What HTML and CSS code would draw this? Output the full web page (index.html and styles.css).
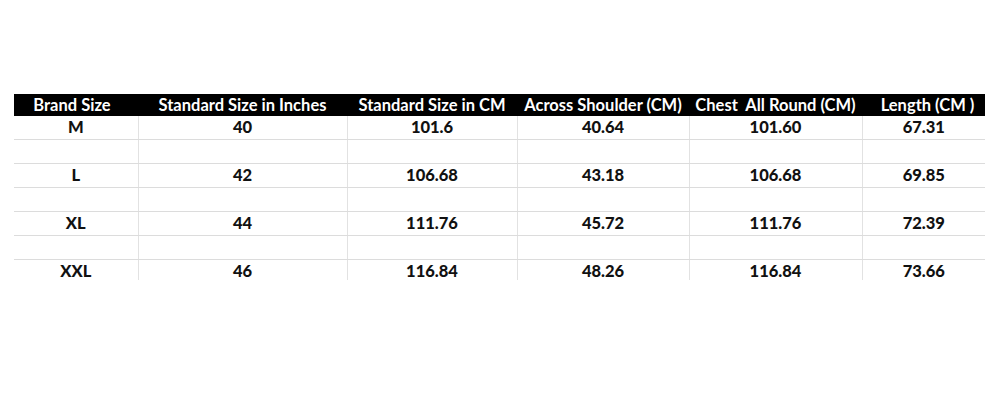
FILE: index.html
```html
<!DOCTYPE html>
<html>
<head>
<meta charset="utf-8">
<link rel="stylesheet" href="styles.css">
</head>
<body>
<div class="sheet">
  <table class="sizes">
    <colgroup>
      <col class="c1"><col class="c2"><col class="c3"><col class="c4"><col class="c5"><col class="c6">
    </colgroup>
    <thead>
      <tr>
        <th>Brand Size</th>
        <th>Standard Size in Inches</th>
        <th>Standard Size in CM</th>
        <th>Across Shoulder (CM)</th>
        <th>Chest&nbsp; All Round (CM)</th>
        <th>Length (CM )</th>
      </tr>
    </thead>
    <tbody>
      <tr><td>M</td><td>40</td><td>101.6</td><td>40.64</td><td>101.60</td><td>67.31</td></tr>
      <tr class="blank"><td></td><td></td><td></td><td></td><td></td><td></td></tr>
      <tr><td>L</td><td>42</td><td>106.68</td><td>43.18</td><td>106.68</td><td>69.85</td></tr>
      <tr class="blank"><td></td><td></td><td></td><td></td><td></td><td></td></tr>
      <tr><td>XL</td><td>44</td><td>111.76</td><td>45.72</td><td>111.76</td><td>72.39</td></tr>
      <tr class="blank"><td></td><td></td><td></td><td></td><td></td><td></td></tr>
      <tr><td>XXL</td><td>46</td><td>116.84</td><td>48.26</td><td>116.84</td><td>73.66</td></tr>
    </tbody>
  </table>
</div>
</body>
</html>
```
FILE: styles.css
```css
html, body {
  margin: 0;
  padding: 0;
  background: #fff;
}
body {
  font-family: Lato, "Open Sans", sans-serif;
}
.sheet {
  margin: 94px 0 0 14px;
  width: 971px;
  height: 186px;
  overflow: hidden;
}
.sizes {
  border-collapse: collapse;
  table-layout: fixed;
  width: 971px;
}
.c1 { width: 124px; }
.c2 { width: 209px; }
.c3 { width: 170px; }
.c4 { width: 172px; }
.c5 { width: 173px; }
.c6 { width: 123px; }
.sizes th {
  background: #000;
  color: #fff;
  font-weight: 700;
  font-size: 16.5px;
  height: 22px;
  padding: 0;
  text-align: center;
  white-space: nowrap;
  line-height: 22px;
}
.sizes th:first-child {
  padding-right: 8px;
}
.sizes th:last-child {
  padding-left: 8px;
}
.sizes td {
  height: 23px;
  padding: 0;
  font-size: 16.5px;
  font-weight: 900;
  color: #111;
  text-align: center;
  line-height: 23px;
  border-bottom: 1px solid #dcdcdc;
  border-left: 1px solid #e2e2e2;
}
.sizes td:first-child {
  border-left: none;
}
```
